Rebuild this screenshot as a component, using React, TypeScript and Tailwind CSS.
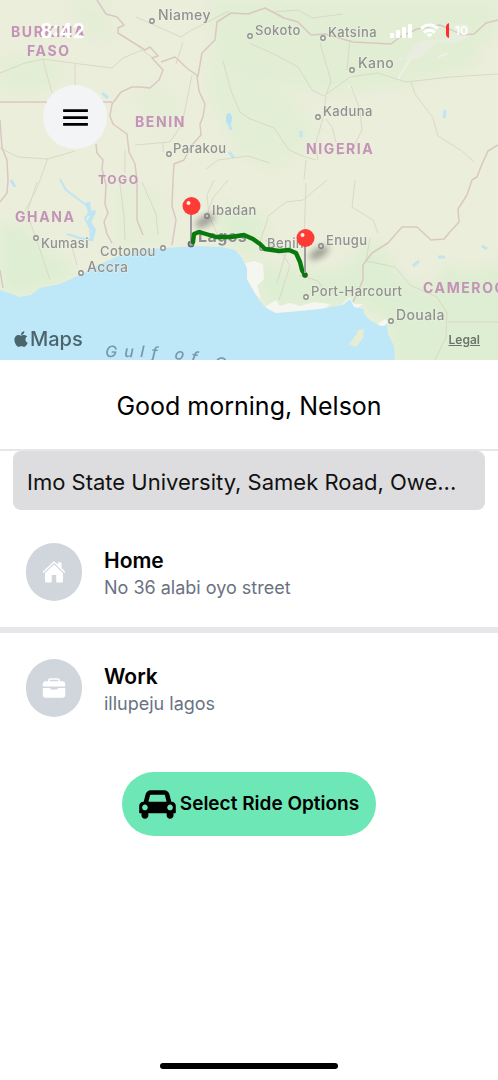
import { IoBriefcase, IoHome } from "react-icons/io5";
import { MdMenu } from "react-icons/md";
import { FaApple } from "react-icons/fa";
import type { ReactNode } from "react";

type City = { name: string; x: number; y: number; dx: number; dy: number; size: string };

const cities: City[] = [
  { name: "Niamey", x: 158, y: 20, dx: 152, dy: 21, size: "text-[14px]" },
  { name: "Sokoto", x: 255, y: 35, dx: 250, dy: 36, size: "text-[13px]" },
  { name: "Katsina", x: 328, y: 37, dx: 323, dy: 38, size: "text-[13px]" },
  { name: "Kano", x: 358, y: 68, dx: 352, dy: 70, size: "text-[14px]" },
  { name: "Kaduna", x: 323, y: 116, dx: 318, dy: 117, size: "text-[13px]" },
  { name: "Parakou", x: 173, y: 153, dx: 169, dy: 154, size: "text-[13px]" },
  { name: "Ibadan", x: 212, y: 215, dx: 207, dy: 216, size: "text-[13px]" },
  { name: "Kumasi", x: 41, y: 248, dx: 36, dy: 238, size: "text-[13px]" },
  { name: "Cotonou", x: 100, y: 256, dx: 163, dy: 248, size: "text-[13px]" },
  { name: "Accra", x: 87, y: 272, dx: 81, dy: 273, size: "text-[14px]" },
  { name: "Benin", x: 267, y: 248, dx: 262, dy: 248, size: "text-[13px]" },
  { name: "Enugu", x: 326, y: 245, dx: 321, dy: 246, size: "text-[13px]" },
  { name: "Port-Harcourt", x: 311, y: 296, dx: 306, dy: 297, size: "text-[13px]" },
  { name: "Douala", x: 396, y: 320, dx: 391, dy: 321, size: "text-[14px]" },
];

const countries = [
  { name: "BURKINA", x: 11, y: 37, size: "text-[14px]" },
  { name: "FASO", x: 27, y: 56, size: "text-[14px]" },
  { name: "BENIN", x: 135, y: 127, size: "text-[14px]" },
  { name: "TOGO", x: 98, y: 184, size: "text-[12px]" },
  { name: "NIGERIA", x: 306, y: 154, size: "text-[14px]" },
  { name: "GHANA", x: 15, y: 222, size: "text-[14px]" },
  { name: "CAMEROON", x: 423, y: 293, size: "text-[14px]" },
];

const gulf = [
  { c: "G", x: 105, y: 357, r: 2 },
  { c: "u", x: 124, y: 357, r: 2 },
  { c: "l", x: 140, y: 357, r: 3 },
  { c: "f", x: 151, y: 358, r: 4 },
  { c: "o", x: 174, y: 359, r: 8 },
  { c: "f", x: 190, y: 362, r: 12 },
  { c: "G", x: 213, y: 367, r: 14 },
];

function Pin({ x, y, tip }: { x: number; y: number; tip: number }) {
  return (
    <g>
      <ellipse cx={x + 14} cy={y + 15} rx="11" ry="5" fill="#555" opacity="0.5" filter="url(#soft)" transform={`rotate(-30 ${x + 14} ${y + 15})`} />
      <path d={`M${x} ${y + 8}V${tip}`} stroke="#9c9c9c" strokeWidth="2" />
      <circle cx={x + 0.5} cy={y} r="9" fill="#ff3b36" />
      <circle cx={x - 2.5} cy={y - 3} r="2" fill="#fff" opacity="0.9" />
    </g>
  );
}

function MapDrawing() {
  return (
    <svg viewBox="0 0 498 360" preserveAspectRatio="xMidYMid slice" className="block h-full w-full" role="img" aria-label="Route from Lagos to Owerri">
      <defs>
        <filter id="soft" x="-50%" y="-50%" width="200%" height="200%"><feGaussianBlur stdDeviation="3" /></filter>
        <filter id="terrain" x="-20%" y="-20%" width="140%" height="140%"><feGaussianBlur stdDeviation="7" /></filter>
      </defs>
      <rect width="498" height="360" fill="#ebeedb" />
      <g fill="#deeed2" filter="url(#terrain)">
        <path d="M210 0H498V22L470 68 400 85 330 95 270 80 215 60Z" opacity=".8" />
        <path d="M0 60 45 55 70 75 30 95 0 90Z" opacity=".7" />
        <path d="M70 0H110V45L85 35Z" opacity=".5" />
        <path d="M205 60 250 65 290 95 320 135 275 170 240 155 210 100Z" opacity=".6" />
        <path d="M0 222 25 228 45 250 70 262 75 275 40 290 20 297 0 290Z" />
        <path d="M115 180 162 190 168 245 115 252Z" opacity=".4" />
        <path d="M225 205 268 218 262 250 244 255 215 222Z" />
        <path d="M248 260 300 270 342 270 370 240 388 255 400 275 430 292 445 265 475 272 510 260V370H395L388 325 362 305 268 311Z" />
        <path d="M130 95 160 80 185 105 165 140Z" opacity=".4" />
      </g>
      <path d="m384 69 19-10 16-18 16-1 33-4-8 6-24 1-16 15-9 2-10-3Z" fill="#ecece6" opacity=".7" />
      <path d="M438 57l10-4M348 86l6 6M398 79l12-20" stroke="#f3f1ec" strokeWidth="2" fill="none" opacity=".7" />
      <path d="M242 264 254 261 263 264 264 279 257 286 261 299 248 288ZM265 307 276 300 280 306 290 303 300 306 314 302 330 304 325 309 276 314ZM342 304 350 297 354 304 363 304 355 310Z" fill="#f6f6f0" />
      <path d="M0 290 12 294 20 297 31 295 40 288 60 284 82 274 100 264 116 257 136 250 166 248 194 246 222 247 235 250 242 258 247 268 247 279 253 290 259 300 266 308 276 313 300 311 320 309 343 305 350 299 354 307 363 309 365 315 371 321 380 326 387 325 388 334 394 346 395 360H0Z" fill="#bee7f8" />
      <path d="m379 323 6-4 3 3-4 4-5-1Z" fill="#f7f8f4" />
      <path d="m358 330 6-1-1 9-7 9-7-3 7-9Z" fill="#e5edd3" />
      <g fill="none" stroke="#bfe5f3" strokeWidth="2" strokeLinejoin="round">
        <path d="M60 179 66 190 74 196 86 205 90 212 85 218 90 228 91 240M67 234 80 238 92 240" />
        <path d="m88 202 2 12 4-2-5 10 5 8-3 11" strokeWidth="4" />
        <path d="m11 180 4 7M102 93l6 5M228 114l1 9 2 7M229 152l5 6M301 131v6M445 110l-1 8M413 266l6-5M438 257h7M482 246l5 3" strokeWidth="3" />
      </g>
      <ellipse cx="229" cy="119" rx="3" ry="6" fill="#b6e0f4" />
      <g fill="none" stroke="#d7d5c3" strokeWidth="1" strokeLinejoin="round" opacity=".85">
        <path d="M0 73 25 63 43 59 80 64 112 68 123 58 142 50 153 58M43 60 52 93M75 64V86M0 148 18 157 48 159 75 151M48 158 37 188 25 211M136 17 181 37 190 31 229 11M176 64 183 42M223 61 231 91 240 112 250 119M135 145 170 142 182 124 192 75M206 169 218 160 248 156 270 163M37 182 27 213 40 250 50 280M72 247 77 265" />
        <path d="M249 43 274 54 298 67 312 90 324 96 350 77 378 73 406 82 450 77 498 74M326 96 323 118 315 146 318 160M351 86 360 110 362 130 352 150 337 155M326 119 332 127 336 142M411 82 415 94 433 118 438 136 462 151 474 162M248 118 274 128 289 150 305 157 316 160M304 180 306 160M306 183 304 240M355 180 352 207 373 220 378 233M267 217 286 202 303 200 327 180M320 43 331 81 326 95M350 40 347 70M274 12 298 10 312 18 343 14" />
        <path d="M265 240 280 250 290 266 279 300M268 218 260 242M286 252 277 283M299 275 318 281 324 290M370 238 366 261 395 267 410 285 437 297 447 313 446 337 435 360M448 322H498M214 180 207 195 209 216 220 240M228 180 213 198 207 215M120 184 124 216 125 240M142 182 156 214 158 235M125 150V173M163 142V152" />
      </g>
      <g fill="none" stroke="#d9c3c1" strokeWidth="1.5" strokeLinejoin="round" opacity=".9">
        <path d="M97 0 106 14 117 17 124 25 118 28V33L145 50 150 47 158 56 152 58 163 70 159 80 150 88 140 87 132 87 121 92 112 104 110 116 113 124 127 134 129 152 135 164 137 180 137 220 143 235" />
        <path d="M161 62 175 57 188 69 198 76 202 53 215 40 217 22 231 13 248 14 265 8 284 18 298 22 311 35 325 34 353 42 391 44 400 37 417 29 440 25 463 35 474 34 486 23 498 20M197 76 199 91 205 104 203 117 200 124 201 135 192 145 184 160 174 164 173 180 172 206 176 220 172 245" />
        <path d="M0 102H45L53 104M102 102 112 102M96 144 97 153 103 160 102 169 106 185 105 204 108 213 104 222 107 234 112 243M0 120 2 148 7 160 8 180 7 193 0 202M0 270 3 288" />
        <path d="M498 145 488 151 482 164 477 177 472 180 467 195 458 209 459 222 450 232 444 239 431 240 417 227 402 227 388 243 372 253 363 265V280L353 302" />
      </g>

      <g className="fill-[#c493b8] font-bold tracking-widest">
        {countries.map((c) => <text key={c.name} x={c.x} y={c.y} className={c.size}>{c.name}</text>)}
      </g>
      <g className="fill-[#8f9190] font-medium tracking-wide" stroke="#eff2e3" strokeWidth="1" paintOrder="stroke">
        {cities.map((c) => (
          <text key={c.name} x={c.x} y={c.y} className={c.size}>{c.name}</text>
        ))}
        <text x="198" y="242" className="text-[16px] font-bold">Lagos</text>
      </g>
      <g fill="#f2f3e8" stroke="#8f9190" strokeWidth="1.4">
        {cities.map((c) => <circle key={c.name} cx={c.dx} cy={c.dy} r="2.2" />)}
      </g>
      <g className="fill-[#7897aa] text-[16px] font-medium italic">
        {gulf.map((g) => <text key={g.x} x={g.x} y={g.y} transform={`rotate(${g.r} ${g.x} ${g.y})`}>{g.c}</text>)}
      </g>
      <circle cx="191" cy="244" r="2.6" fill="#aaa" stroke="#666" strokeWidth="1.5" />
      <circle cx="305" cy="275" r="2" fill="#777" stroke="#333" strokeWidth="1.5" />
      <Pin x={191} y={206} tip={244} />
      <Pin x={305} y={238} tip={274} />
      <path d="M193 242 194 234 199 232 206 234 216 237 231 237 244 235 253 239 260 244 265 249 279 251 289 250 296 253 300 262 302 270 305 275" fill="none" stroke="#08790c" strokeWidth="4.4" strokeLinecap="round" strokeLinejoin="round" />
      <path d="M305 247V273" stroke="#9c9c9c" strokeWidth="2" />
    </svg>
  );
}

function StatusBar() {
  return (
    <div className="absolute inset-x-0 top-0 flex items-start justify-between pt-5 pr-7 pl-10 text-white">
      <span className="text-[20px] leading-[22px] font-semibold">8:42</span>
      <svg width="80" height="20" viewBox="0 0 80 20" aria-label="Signal, Wi-Fi, battery 10 percent">
        <rect x="0" y="13" width="4" height="5" rx="1" fill="#fff" />
        <rect x="6" y="10" width="4" height="8" rx="1" fill="#fff" />
        <rect x="12" y="7" width="4" height="11" rx="1" fill="#fff" />
        <rect x="18" y="4" width="4" height="14" rx="1" fill="#fff" />
        <g fill="none" stroke="#fff" strokeWidth="3">
          <path d="M31 8.500q8.500-7 17 0M34 12.500q5.500-4.500 11 0" />
        </g>
        <path d="m36.500 14.500 3 3 3-3q-3-2.500-6 0Z" fill="#fff" />
        <rect x="60" y="4" width="19" height="14" rx="4" fill="#fff" opacity=".15" />
        <path d="M59 3v15q-3-1-3-4V7q0-3 3-4Z" fill="#ff2d2d" />
        <text x="65" y="15" fill="#fff" className="text-[12px] font-semibold">10</text>
      </svg>
    </div>
  );
}

function CarIcon() {
  return (
    <svg viewBox="0 0 2048 1792" className="h-8 w-[37px]" fill="currentColor" aria-hidden="true">
      <path d="M480 1088q0-66-47-113t-113-47-113 47-47 113 47 113 113 47 113-47 47-113zm36-320h1016l-89-357q-2-8-14-17.500t-21-9.500h-768q-9 0-21 9.500t-14 17.500zm1372 320q0-66-47-113t-113-47-113 47-47 113 47 113 113 47 113-47 47-113zm160-96v384q0 14-9 23t-23 9h-96v128q0 80-56 136t-136 56-136-56-56-136v-128h-1024v128q0 80-56 136t-136 56-136-56-56-136v-128h-96q-14 0-23-9t-9-23v-384q0-93 65.500-158.500t158.500-65.500h28l105-419q23-94 104-157.500t179-63.500h768q98 0 179 63.500t104 157.500l105 419h28q93 0 158.500 65.500t65.500 158.500z" />
    </svg>
  );
}

function Place({ icon, title, address }: { icon: ReactNode; title: string; address: string }) {
  return (
    <button type="button" className="flex w-full items-center px-[26px] py-[26px] text-left">
      <span className="mr-[22px] flex h-[58px] w-14 shrink-0 items-center justify-center rounded-full bg-gray-300 text-white">{icon}</span>
      <span className="flex flex-col pt-[4px]">
        <span className="text-[21px] leading-7 font-semibold text-black">{title}</span>
        <span className="text-[18px] leading-[26px] text-gray-500">{address}</span>
      </span>
    </button>
  );
}

export default function App() {
  return (
    <div className="flex min-h-screen flex-col bg-white font-['Inter','Liberation_Sans',sans-serif] text-black">
      <header className="relative h-[360px] w-full overflow-hidden">
        <MapDrawing />
        <StatusBar />
        <button type="button" aria-label="Open menu" className="absolute top-[85px] left-[43px] flex h-16 w-16 items-center justify-center rounded-full bg-gray-100">
          <MdMenu size={33} />
        </button>
        <div className="absolute bottom-2 left-3 flex items-center text-[20px] leading-[26px] font-medium text-[#4c646c]">
          <FaApple size={18} />
          <span>Maps</span>
        </div>
        <a href="#legal" className="absolute right-[18px] bottom-3 text-[12px] leading-4 font-semibold text-[#6b756c] underline">Legal</a>
      </header>

      <main className="flex flex-1 flex-col">
        <h1 className="border-b-2 border-gray-200 pt-7 pb-[25px] text-center text-[25px] leading-9 font-normal">Good morning, Nelson</h1>
        <div className="px-[13px]">
          <input
            aria-label="Destination"
            defaultValue="Imo State University, Samek Road, Owe..."
            className="block h-[59px] w-full rounded-lg bg-[#dddddf] px-[14px] pt-[2px] text-[22px] text-ellipsis text-[#111] outline-none"
          />
        </div>

        <div className="mt-[7px]">
          <Place icon={<IoHome size={24} />} title="Home" address="No 36 alabi oyo street" />
          <hr className="h-[6px] border-0 bg-gray-200" />
          <Place icon={<IoBriefcase size={24} />} title="Work" address="illupeju lagos" />
        </div>

        <button type="button" className="mx-auto mt-[29px] flex h-16 items-center justify-center gap-1 rounded-full bg-[#6ee7b7] px-[17px] text-[19px] font-semibold">
          <CarIcon />
          Select Ride Options
        </button>
      </main>

      <div className="mx-auto mb-[11px] h-[6px] w-[178px] rounded-full bg-black" />
    </div>
  );
}
